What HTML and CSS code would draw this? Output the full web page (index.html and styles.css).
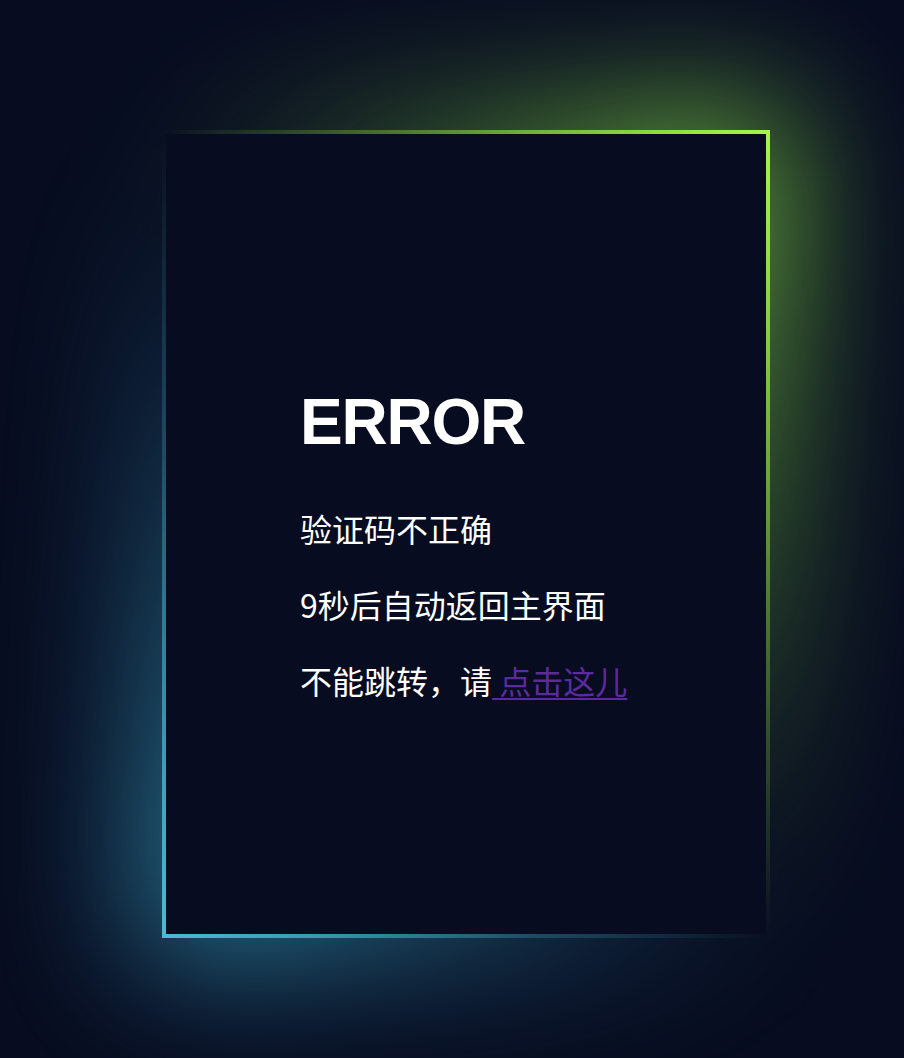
FILE: index.html
```html
<!DOCTYPE html>
<html lang="zh-CN">
<head>
<meta charset="utf-8">
<title>ERROR</title>
<link rel="stylesheet" href="styles.css">
</head>
<body>
<main class="stage">
  <section class="box">
    <div class="inner">
      <div class="content">
        <h1 class="title">ERROR</h1>
        <p class="line">验证码不正确</p>
        <p class="line">9秒后自动返回主界面</p>
        <p class="line">不能跳转，请<a class="link" href="#"> 点击这儿</a></p>
      </div>
    </div>
  </section>
</main>
</body>
</html>
```
FILE: styles.css
```css
html, body {
  margin: 0;
  padding: 0;
}
body {
  background: #070c20;
  font-family: "Liberation Sans", "Noto Sans CJK SC", sans-serif;
  color: #fff;
}
.stage {
  box-sizing: border-box;
  min-height: 1058px;
  padding: 130px 0 0 162px;
}
.box {
  position: relative;
  box-sizing: border-box;
  width: 608px;
  height: 808px;
  padding: 4px;
  display: flex;
  background: linear-gradient(to top right, #4cbcd6 0%, rgba(76,188,214,0.25) 30%, rgba(80,120,60,0) 50%, rgba(166,247,74,0.35) 70%, #a6f74a 100%);
}
.box::before {
  content: "";
  position: absolute;
  inset: -20px;
  background: linear-gradient(to top right, #3aa6c8 0%, rgba(58,166,200,0.4) 30%, rgba(0,0,0,0) 50%, rgba(140,230,70,0.4) 70%, #8ee64a 100%);
  filter: blur(70px);
  opacity: 0.9;
  z-index: -1;
}
.inner {
  flex: 1;
  background: #070c20;
  box-sizing: border-box;
  padding: 256px 0 0 134px;
}
.title {
  margin: 0 0 36px;
  font-family: "Liberation Sans", Arial, sans-serif;
  font-weight: 700;
  font-size: 64px;
  line-height: 64px;
  letter-spacing: -1.2px;
}
.line {
  margin: 0;
  font-family: "Noto Sans CJK SC", "Liberation Sans", sans-serif;
  font-size: 32px;
  line-height: 76px;
}
.link {
  color: #5b2b9e;
  text-decoration: underline;
  text-decoration-thickness: 2px;
  text-underline-offset: 4px;
}
```
